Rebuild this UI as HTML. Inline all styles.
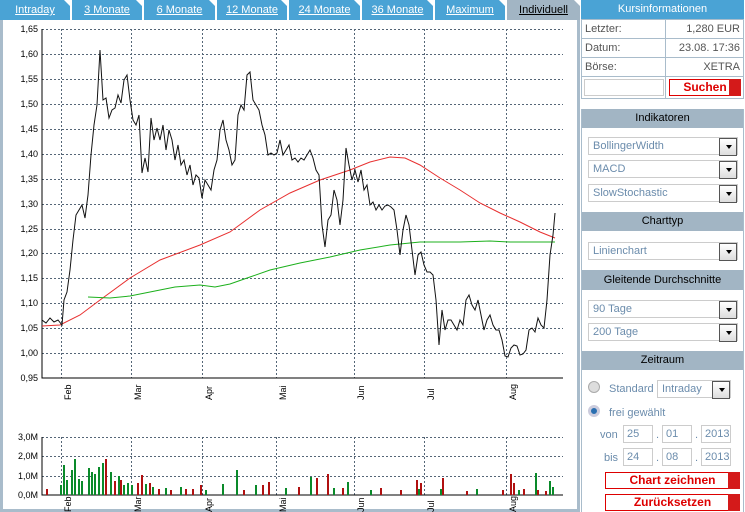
<!DOCTYPE html>
<html><head><meta charset="utf-8"><style>
*{margin:0;padding:0;box-sizing:border-box}
body{width:745px;height:512px;background:#fff;font-family:"Liberation Sans",Arial,sans-serif;font-size:11px;position:relative;overflow:hidden}
.tabs{position:absolute;left:0;top:0;width:580px;height:20px}
.tab{position:absolute;top:0;height:20px;background:#4aa3d5;color:#fff;text-align:center;line-height:20px;font-size:11px;text-decoration:underline}
.tab.act{background:#a2b5c4;color:#000}
.tab:after{content:"";position:absolute;right:0;top:0;border-style:solid;border-width:0 6px 6px 0;border-color:transparent #fff transparent transparent}
.chartbox{position:absolute;left:0;top:20px;width:580px;height:492px;border:3px solid #a9bccb;border-top:none;background:#fff}
.side{position:absolute;left:581px;top:0;width:163px}
.hd{height:19px;line-height:19px;text-align:center;font-size:11px}
.blue{background:#4aa3d5;color:#fff}
.grey{background:#a2b5c4;color:#000}
table{border-collapse:collapse;width:163px}
td{border:1px solid #a9bccb;height:19px;padding:0 3px;color:#555;font-size:11px}
.panel{position:absolute;left:581px;width:163px;border-left:1px solid #a9bccb;border-right:1px solid #a9bccb}
.sel{position:absolute;left:6px;width:150px;height:18px;border:1px solid #ccc;color:#6b8cac;font-size:11px;line-height:16px;padding-left:4px;background:#fff}
.sel:after{content:"";position:absolute;right:0;top:0;width:16px;height:16px;border:1px solid #555;background:#eee linear-gradient(#fff,#ddd)}
.sel b{position:absolute;right:5px;top:7px;width:0;height:0;border:3px solid transparent;border-top:4px solid #000;z-index:2}
.btn{position:absolute;height:17px;border:1px solid #d00;color:#d00;font-weight:bold;font-size:12px;text-align:center;line-height:15px;background:#fff}
.btn:after{content:"";position:absolute;right:-1px;top:-1px;width:12px;height:17px;background:#d41a1a}
.inp{position:absolute;height:18px;border:1px solid #ccc;color:#6b8cac;font-size:11px;line-height:16px;padding-left:3px}
.lbl{position:absolute;color:#6b8cac;font-size:11px}
</style></head><body>
<div class="tabs">
<div class="tab" style="left:0;width:70px">Intraday</div>
<div class="tab" style="left:72px;width:70px">3 Monate</div>
<div class="tab" style="left:144px;width:71px">6 Monate</div>
<div class="tab" style="left:217px;width:70px">12 Monate</div>
<div class="tab" style="left:289px;width:71px">24 Monate</div>
<div class="tab" style="left:362px;width:71px">36 Monate</div>
<div class="tab" style="left:435px;width:70px">Maximum</div>
<div class="tab act" style="left:507px;width:73px">Individuell</div>
</div>
<div class="chartbox"></div>
<svg style="position:absolute;left:0;top:0" width="580" height="512" font-family="Liberation Sans,Arial,sans-serif" font-size="9">
<g stroke="#556677" stroke-dasharray="2,2" stroke-width="1">
<path d="M42 29.5H563M42 54.5H563M42 79.5H563M42 104.5H563M42 129.5H563M42 154.5H563M42 179.5H563M42 204.5H563M42 229.5H563M42 253.5H563M42 278.5H563M42 303.5H563M42 328.5H563M42 353.5H563"/>
<path d="M61.5 29V378M131.5 29V378M202.5 29V378M276.5 29V378M354.5 29V378M424.5 29V378M506.5 29V378"/>
<path d="M42 437.5H563M42 456.5H563M42 476.5H563M61.5 437V495M131.5 437V495M202.5 437V495M276.5 437V495M354.5 437V495M424.5 437V495M506.5 437V495"/>
</g>
<path d="M42 29V378H563M42 437V495H563" stroke="#000" fill="none"/>
<g text-anchor="end" fill="#000">
<text x="38" y="32">1,65</text><text x="38" y="57">1,60</text><text x="38" y="82">1,55</text><text x="38" y="107">1,50</text><text x="38" y="132">1,45</text><text x="38" y="157">1,40</text><text x="38" y="182">1,35</text><text x="38" y="207">1,30</text><text x="38" y="232">1,25</text><text x="38" y="256">1,20</text><text x="38" y="281">1,15</text><text x="38" y="306">1,10</text><text x="38" y="331">1,05</text><text x="38" y="356">1,00</text><text x="38" y="381">0,95</text>
<text x="38" y="440">3,0M</text><text x="38" y="459">2,0M</text><text x="38" y="479">1,0M</text><text x="38" y="498">0,0M</text>
</g>
<g fill="#000">
<text transform="translate(71,400) rotate(-90)">Feb</text><text transform="translate(141,400) rotate(-90)">Mar</text><text transform="translate(212,400) rotate(-90)">Apr</text><text transform="translate(286,400) rotate(-90)">Mai</text><text transform="translate(364,400) rotate(-90)">Jun</text><text transform="translate(434,400) rotate(-90)">Jul</text><text transform="translate(516,400) rotate(-90)">Aug</text>
<text transform="translate(71,512) rotate(-90)">Feb</text><text transform="translate(141,512) rotate(-90)">Mar</text><text transform="translate(212,512) rotate(-90)">Apr</text><text transform="translate(286,512) rotate(-90)">Mai</text><text transform="translate(364,512) rotate(-90)">Jun</text><text transform="translate(434,512) rotate(-90)">Jul</text><text transform="translate(516,512) rotate(-90)">Aug</text>
</g>
<polyline fill="none" stroke="#e83030" stroke-width="1" points="42,326 60,325 80,315 100,300 130,278 160,260 200,245 230,232 260,210 290,193 320,180 350,170 370,162 390,157 405,158 420,165 440,178 460,190 480,203 500,213 520,222 540,232 555,238"/>
<polyline fill="none" stroke="#1cb01c" stroke-width="1" points="88,297 110,298 130,296 150,292 175,287 200,285 215,287 230,284 250,277 270,270 300,263 330,257 360,250 390,245 420,242 460,242 490,241 510,242 530,242 555,242"/>
<polyline fill="none" stroke="#111" stroke-width="1" points="42,320 46,323 50,318 54,322 58,320 62,325 64,300 67,292 70,270 73,240 76,215 79,210 82,205 85,218 88,195 91,155 94,125 97,105 100,50 103,100 106,98 109,118 112,110 115,108 118,95 121,103 124,80 127,75 130,100 133,120 136,125 139,115 142,173 145,158 148,172 151,118 154,140 157,128 160,140 163,125 166,150 169,130 172,140 175,160 178,145 181,165 184,160 187,175 190,165 193,185 196,175 199,178 202,198 205,180 208,185 211,190 214,170 217,160 220,130 223,120 226,140 229,150 232,165 235,160 238,115 241,105 244,110 247,75 250,72 253,100 256,105 259,110 262,125 265,135 268,155 271,153 274,155 277,153 280,140 283,155 286,150 289,145 292,160 295,158 298,162 301,158 304,160 307,155 310,150 313,158 316,170 319,175 322,225 325,247 328,220 331,215 334,190 337,200 340,225 343,200 346,148 349,165 352,180 355,170 358,182 361,170 364,190 367,185 370,205 373,202 376,210 379,205 382,210 385,206 388,205 391,207 394,210 397,230 400,255 403,230 406,215 409,225 412,250 415,275 418,255 421,252 424,265 427,272 430,272 433,275 436,300 439,345 442,310 445,330 448,320 451,320 454,325 457,330 460,320 463,325 466,300 469,295 472,305 475,310 478,300 481,315 484,330 487,320 490,315 493,325 496,330 499,330 502,340 505,356 508,357 511,348 514,345 517,346 520,355 523,354 526,350 529,330 532,328 535,332 538,318 541,325 544,328 547,300 550,255 553,235 555,213"/>
<g fill="#0a8a2a">
<rect x="60" y="485" width="2" height="10"/><rect x="63" y="465" width="2" height="30"/><rect x="66" y="480" width="2" height="15"/><rect x="71" y="470" width="2" height="25"/><rect x="74" y="459" width="2" height="36"/><rect x="78" y="479" width="2" height="16"/><rect x="81" y="481" width="2" height="14"/><rect x="88" y="468" width="2" height="27"/><rect x="91" y="472" width="2" height="23"/><rect x="94" y="474" width="2" height="21"/><rect x="98" y="467" width="2" height="28"/><rect x="102" y="463" width="2" height="32"/><rect x="110" y="472" width="2" height="23"/><rect x="118" y="476" width="2" height="19"/><rect x="123" y="485" width="2" height="10"/><rect x="127" y="483" width="2" height="12"/><rect x="131" y="485" width="2" height="10"/><rect x="145" y="484" width="2" height="11"/><rect x="152" y="487" width="2" height="8"/><rect x="165" y="488" width="2" height="7"/><rect x="180" y="487" width="2" height="8"/><rect x="205" y="490" width="2" height="5"/><rect x="222" y="484" width="2" height="11"/><rect x="236" y="470" width="2" height="25"/><rect x="255" y="485" width="2" height="10"/><rect x="285" y="488" width="2" height="7"/><rect x="310" y="477" width="2" height="18"/><rect x="333" y="488" width="2" height="7"/><rect x="347" y="482" width="2" height="13"/><rect x="370" y="490" width="2" height="5"/><rect x="418" y="489" width="2" height="6"/><rect x="440" y="489" width="2" height="6"/><rect x="476" y="489" width="2" height="6"/><rect x="518" y="490" width="2" height="5"/><rect x="535" y="473" width="2" height="22"/><rect x="549" y="481" width="2" height="14"/><rect x="552" y="487" width="2" height="8"/>
</g>
<g fill="#b01010">
<rect x="46" y="489" width="2" height="6"/><rect x="105" y="459" width="2" height="36"/><rect x="114" y="481" width="2" height="14"/><rect x="120" y="480" width="2" height="15"/><rect x="137" y="483" width="2" height="12"/><rect x="141" y="475" width="2" height="20"/><rect x="149" y="483" width="2" height="12"/><rect x="158" y="489" width="2" height="6"/><rect x="170" y="490" width="2" height="5"/><rect x="185" y="489" width="2" height="6"/><rect x="192" y="489" width="2" height="6"/><rect x="200" y="485" width="2" height="10"/><rect x="243" y="490" width="2" height="5"/><rect x="262" y="485" width="2" height="10"/><rect x="268" y="482" width="2" height="13"/><rect x="298" y="487" width="2" height="8"/><rect x="316" y="478" width="2" height="17"/><rect x="327" y="474" width="2" height="21"/><rect x="342" y="488" width="2" height="7"/><rect x="380" y="488" width="2" height="7"/><rect x="400" y="490" width="2" height="5"/><rect x="416" y="480" width="2" height="15"/><rect x="420" y="483" width="2" height="12"/><rect x="442" y="478" width="2" height="17"/><rect x="466" y="491" width="2" height="4"/><rect x="502" y="490" width="2" height="5"/><rect x="510" y="474" width="2" height="21"/><rect x="513" y="483" width="2" height="12"/><rect x="523" y="489" width="2" height="6"/><rect x="537" y="490" width="2" height="5"/><rect x="545" y="491" width="2" height="4"/>
</g>
</svg>

<div class="side">
<div class="hd blue">Kursinformationen</div>
<table>
<tr><td>Letzter:</td><td style="text-align:right">1,280 EUR</td></tr>
<tr><td>Datum:</td><td style="text-align:right">23.08. 17:36</td></tr>
<tr><td>Börse:</td><td style="text-align:right">XETRA</td></tr>
<tr><td style="height:22px;width:84px;position:relative"><div style="position:absolute;left:2px;top:2px;width:80px;height:17px;border:1px solid #ccc"></div></td><td style="position:relative"><div class="btn" style="left:3px;top:2px;width:72px">Suchen</div></td></tr>
</table>
</div>
<div class="panel" style="top:109px;height:403px">
<div class="hd grey">Indikatoren</div>
<div class="sel" style="top:28px">BollingerWidth<b></b></div>
<div class="sel" style="top:51px">MACD<b></b></div>
<div class="sel" style="top:75px">SlowStochastic<b></b></div>
<div class="hd grey" style="position:absolute;top:103px;width:161px">Charttyp</div>
<div class="sel" style="top:133px">Linienchart<b></b></div>
<div class="hd grey" style="position:absolute;top:161px;width:161px;height:20px;line-height:20px">Gleitende Durchschnitte</div>
<div class="sel" style="top:191px">90 Tage<b></b></div>
<div class="sel" style="top:214px">200 Tage<b></b></div>
<div class="hd grey" style="position:absolute;top:242px;width:161px">Zeitraum</div>
<div style="position:absolute;left:6px;top:272px;width:12px;height:12px;border-radius:50%;background:#ddd;border:1px solid #aaa"></div>
<div class="lbl" style="left:27px;top:274px">Standard</div>
<div class="sel" style="top:271px;left:75px;width:74px">Intraday<b></b></div>
<div style="position:absolute;left:6px;top:296px;width:12px;height:12px;border-radius:50%;background:#2a6fb0;border:3px solid #ccd"></div>
<div class="lbl" style="left:27px;top:298px">frei gewählt</div>
<div class="lbl" style="left:18px;top:320px">von</div>
<div class="inp" style="left:41px;top:316px;width:30px">25</div><div class="lbl" style="left:74px;top:320px">.</div>
<div class="inp" style="left:80px;top:316px;width:30px">01</div><div class="lbl" style="left:113px;top:320px">.</div>
<div class="inp" style="left:119px;top:316px;width:30px">2013</div>
<div class="lbl" style="left:22px;top:343px">bis</div>
<div class="inp" style="left:41px;top:339px;width:30px">24</div><div class="lbl" style="left:74px;top:343px">.</div>
<div class="inp" style="left:80px;top:339px;width:30px">08</div><div class="lbl" style="left:113px;top:343px">.</div>
<div class="inp" style="left:119px;top:339px;width:30px">2013</div>
<div class="btn" style="left:23px;top:363px;width:135px">Chart zeichnen</div>
<div class="btn" style="left:23px;top:385px;width:135px">Zurücksetzen</div>
</div>
</body></html>
